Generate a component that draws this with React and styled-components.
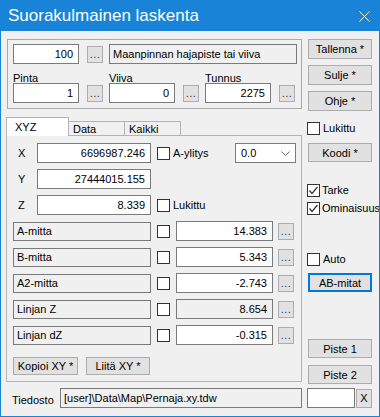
import React from 'react';
import styled, { createGlobalStyle } from 'styled-components';

const GlobalStyle = createGlobalStyle`
  body {
    margin: 0;
    background: #ffffff;
    font-family: 'Liberation Sans', Arial, sans-serif;
    font-size: 11px;
    color: #000;
  }
`;

const Window = styled.div`
  width: 380px;
  height: 417px;
  box-sizing: border-box;
  border: 1px solid #1883d7;
  background: #f0f0f0;
  display: flex;
  flex-direction: column;
  overflow: hidden;
`;

const TitleBar = styled.div`
  height: 30px;
  background: #1883d7;
  color: #fff;
  display: flex;
  align-items: center;
  padding-left: 7px;
  font-size: 17px;
`;

const CloseBox = styled.div`
  margin-left: auto;
  padding-right: 9px;
  display: flex;
  align-items: center;
`;

const Main = styled.div`
  display: flex;
  padding-left: 5px;
`;

const LeftCol = styled.div`
  width: 296px;
  display: flex;
  flex-direction: column;
`;

const RightCol = styled.div`
  width: 64px;
  margin-left: 6px;
  display: flex;
  flex-direction: column;
`;

const GroupBox = styled.div`
  margin: 8px 0 0 1px;
  width: 295px;
  height: 70px;
  box-sizing: border-box;
  border: 1px solid #a9a9a9;
  padding: 4px 0 0 5px;
`;

const Row = styled.div`
  display: flex;
  align-items: center;
  height: ${(p) => p.$h || 20}px;
  margin-top: ${(p) => p.$mt || 0}px;
`;

const Cell = styled.div`
  display: flex;
  align-items: center;
  width: ${(p) => p.$w}px;
  flex: none;
`;

const LabelRow = styled.div`
  display: flex;
  height: 19px;
  box-sizing: border-box;
  padding-top: 8px;
  line-height: 12px;
`;

const TextBox = styled.div`
  box-sizing: border-box;
  width: ${(p) => p.$w}px;
  height: ${(p) => p.$h || 20}px;
  flex: none;
  border: 1px solid #7a7a7a;
  background: ${(p) => (p.$ro ? '#f0f0f0' : '#ffffff')};
  display: flex;
  align-items: center;
  justify-content: ${(p) => (p.$left ? 'flex-start' : 'flex-end')};
  padding: 0 ${(p) => (p.$left ? 3 : 5)}px;
  white-space: nowrap;
  overflow: hidden;
  margin-left: ${(p) => p.$ml || 0}px;
`;

const DotButton = styled.div`
  box-sizing: border-box;
  width: 16px;
  height: 17px;
  flex: none;
  margin-left: ${(p) => (p.$ml === undefined ? 8 : p.$ml)}px;
  background: #e1e1e1;
  border: 1px solid #adadad;
  display: flex;
  align-items: flex-end;
  justify-content: center;
  padding-bottom: 3px;
  line-height: 10px;
  color: #333;
  letter-spacing: 0.5px;
`;

const Button = styled.div`
  box-sizing: border-box;
  width: ${(p) => p.$w || 64}px;
  height: ${(p) => p.$h || 19}px;
  margin-top: ${(p) => p.$mt || 0}px;
  margin-left: ${(p) => p.$ml || 0}px;
  flex: none;
  background: #e1e1e1;
  border: 1px solid ${(p) => (p.$focus ? '#0078d7' : '#adadad')};
  box-shadow: ${(p) => (p.$focus ? 'inset 0 0 0 1px #0078d7' : 'none')};
  display: flex;
  align-items: center;
  justify-content: center;
  white-space: nowrap;
`;

const CheckRow = styled.div`
  display: flex;
  align-items: center;
  height: 13px;
  margin-top: ${(p) => p.$mt || 0}px;
  margin-left: ${(p) => p.$ml || 0}px;
  white-space: nowrap;
  line-height: 13px;
`;

const Box = styled.span`
  box-sizing: border-box;
  width: 13px;
  height: 13px;
  flex: none;
  border: 1px solid #333;
  background: #fff;
  display: inline-flex;
  align-items: center;
  justify-content: center;
  margin-right: ${(p) => p.$mr || 0}px;
`;

const TabStrip = styled.div`
  display: flex;
  align-items: flex-end;
  height: 19px;
  margin-top: 8px;
  margin-bottom: -1px;
  position: relative;
  z-index: 1;
`;

const Tab = styled.div`
  box-sizing: border-box;
  width: ${(p) => p.$w}px;
  height: ${(p) => (p.$active ? 19 : 14)}px;
  margin-bottom: ${(p) => (p.$active ? 0 : 1)}px;
  margin-left: ${(p) => (p.$first ? 0 : -1)}px;
  background: ${(p) => (p.$active ? '#ffffff' : '#f0f0f0')};
  border: 1px solid #b4b4b4;
  border-bottom: none;
  display: flex;
  align-items: center;
  padding-left: ${(p) => p.$pl}px;
`;

const Panel = styled.div`
  box-sizing: border-box;
  width: 296px;
  height: 247px;
  border: 1px solid #b4b4b4;
  padding: 7px 0 0 6px;
  display: flex;
  flex-direction: column;
  gap: 6px;
`;

const AxisLabel = styled.div`
  width: 24px;
  flex: none;
  box-sizing: border-box;
  padding-left: 5px;
`;

const Select = styled.div`
  box-sizing: border-box;
  width: 61px;
  height: 20px;
  margin-left: auto;
  margin-right: 5px;
  border: 1px solid #7a7a7a;
  background: #fff;
  display: flex;
  align-items: center;
  padding: 0 5px 0 5px;
  justify-content: space-between;
`;

const BottomRow = styled.div`
  display: flex;
  align-items: center;
  height: 20px;
  margin-top: 4px;
  padding-left: 11px;
`;

const FileLabel = styled.div`
  width: 48px;
  flex: none;
  padding-top: 4px;
`;

const Check = ({ checked, mr }) => (
  <Box $mr={mr}>
    {checked && (
      <svg width="11" height="11" viewBox="0 0 11 11">
        <polyline points="1.5,5.5 4,8.5 9.5,2" fill="none" stroke="#333" strokeWidth="1.2" />
      </svg>
    )}
  </Box>
);

const measures = [
  { name: 'A-mitta', value: '14.383' },
  { name: 'B-mitta', value: '5.343' },
  { name: 'A2-mitta', value: '-2.743' },
  { name: 'Linjan Z', value: '8.654', ro: true },
  { name: 'Linjan dZ', value: '-0.315' },
];

export default function App() {
  return (
    <>
      <GlobalStyle />
      <Window>
        <TitleBar>
          Suorakulmainen laskenta
          <CloseBox>
            <svg width="11" height="11" viewBox="0 0 11 11">
              <path d="M0.5 0.5L10.5 10.5M10.5 0.5L0.5 10.5" stroke="#fff" strokeWidth="1" />
            </svg>
          </CloseBox>
        </TitleBar>
        <Main>
          <LeftCol>
            <GroupBox>
              <Row>
                <Cell $w={96}>
                  <TextBox $w={66}>100</TextBox>
                  <DotButton>...</DotButton>
                </Cell>
                <TextBox $w={188} $ro $left>
                  Maanpinnan hajapiste tai viiva
                </TextBox>
              </Row>
              <LabelRow>
                <Cell $w={96}>Pinta</Cell>
                <Cell $w={96}>Viiva</Cell>
                <Cell $w={96}>Tunnus</Cell>
              </LabelRow>
              <Row>
                <Cell $w={96}>
                  <TextBox $w={66}>1</TextBox>
                  <DotButton>...</DotButton>
                </Cell>
                <Cell $w={96}>
                  <TextBox $w={66}>0</TextBox>
                  <DotButton>...</DotButton>
                </Cell>
                <Cell $w={96}>
                  <TextBox $w={66}>2275</TextBox>
                  <DotButton>...</DotButton>
                </Cell>
              </Row>
            </GroupBox>

            <TabStrip>
              <Tab $w={63} $active $first $pl={8}>XYZ</Tab>
              <Tab $w={57} $pl={4}>Data</Tab>
              <Tab $w={57} $pl={4}>Kaikki</Tab>
            </TabStrip>
            <Panel>
              <Row>
                <AxisLabel>X</AxisLabel>
                <TextBox $w={114}>6696987.246</TextBox>
                <Cell $w={70} style={{ marginLeft: 6 }}>
                  <Check mr={3} />
                  A-ylitys
                </Cell>
                <Select>
                  0.0
                  <svg width="9" height="5" viewBox="0 0 9 5">
                    <polyline points="0.5,0.5 4.5,4.5 8.5,0.5" fill="none" stroke="#6a6a6a" strokeWidth="1" />
                  </svg>
                </Select>
              </Row>
              <Row>
                <AxisLabel>Y</AxisLabel>
                <TextBox $w={114}>27444015.155</TextBox>
              </Row>
              <Row>
                <AxisLabel>Z</AxisLabel>
                <TextBox $w={114}>8.339</TextBox>
                <Cell $w={70} style={{ marginLeft: 6 }}>
                  <Check mr={3} />
                  Lukittu
                </Cell>
              </Row>
              {measures.map((m) => (
                <Row key={m.name}>
                  <TextBox $w={138} $h={19} $ro $left>
                    {m.name}
                  </TextBox>
                  <Cell $w={19} style={{ marginLeft: 6 }}>
                    <Check />
                  </Cell>
                  <TextBox $w={97} $ro={m.ro}>
                    {m.value}
                  </TextBox>
                  <DotButton $ml={5}>...</DotButton>
                </Row>
              ))}
              <Row $h={18} $mt={6}>
                <Button $w={65} $h={18}>Kopioi XY *</Button>
                <Button $w={64} $h={18} $ml={8}>Liitä XY *</Button>
              </Row>
            </Panel>
          </LeftCol>

          <RightCol>
            <Button $h={20} $mt={8}>Tallenna *</Button>
            <Button $h={20} $mt={6}>Sulje *</Button>
            <Button $h={20} $mt={6}>Ohje *</Button>
            <CheckRow $mt={11} $ml={-1}>
              <Check mr={3} />
              Lukittu
            </CheckRow>
            <Button $mt={8}>Koodi *</Button>
            <CheckRow $mt={22} $ml={-1}>
              <Check checked mr={2} />
              Tarke
            </CheckRow>
            <CheckRow $mt={5} $ml={-1}>
              <Check checked mr={2} />
              Ominaisuus
            </CheckRow>
            <CheckRow $mt={38} $ml={-1}>
              <Check mr={3} />
              Auto
            </CheckRow>
            <Button $mt={7} $focus>AB-mitat</Button>
            <Button $mt={47}>Piste 1</Button>
            <Button $mt={7}>Piste 2</Button>
          </RightCol>
        </Main>

        <BottomRow>
          <FileLabel>Tiedosto</FileLabel>
          <TextBox $w={242} $ro $left>
            [user]\Data\Map\Pernaja.xy.tdw
          </TextBox>
          <TextBox $w={48} $ml={5} />
          <Button $w={16} $h={19} $ml={1}>X</Button>
        </BottomRow>
      </Window>
    </>
  );
}
